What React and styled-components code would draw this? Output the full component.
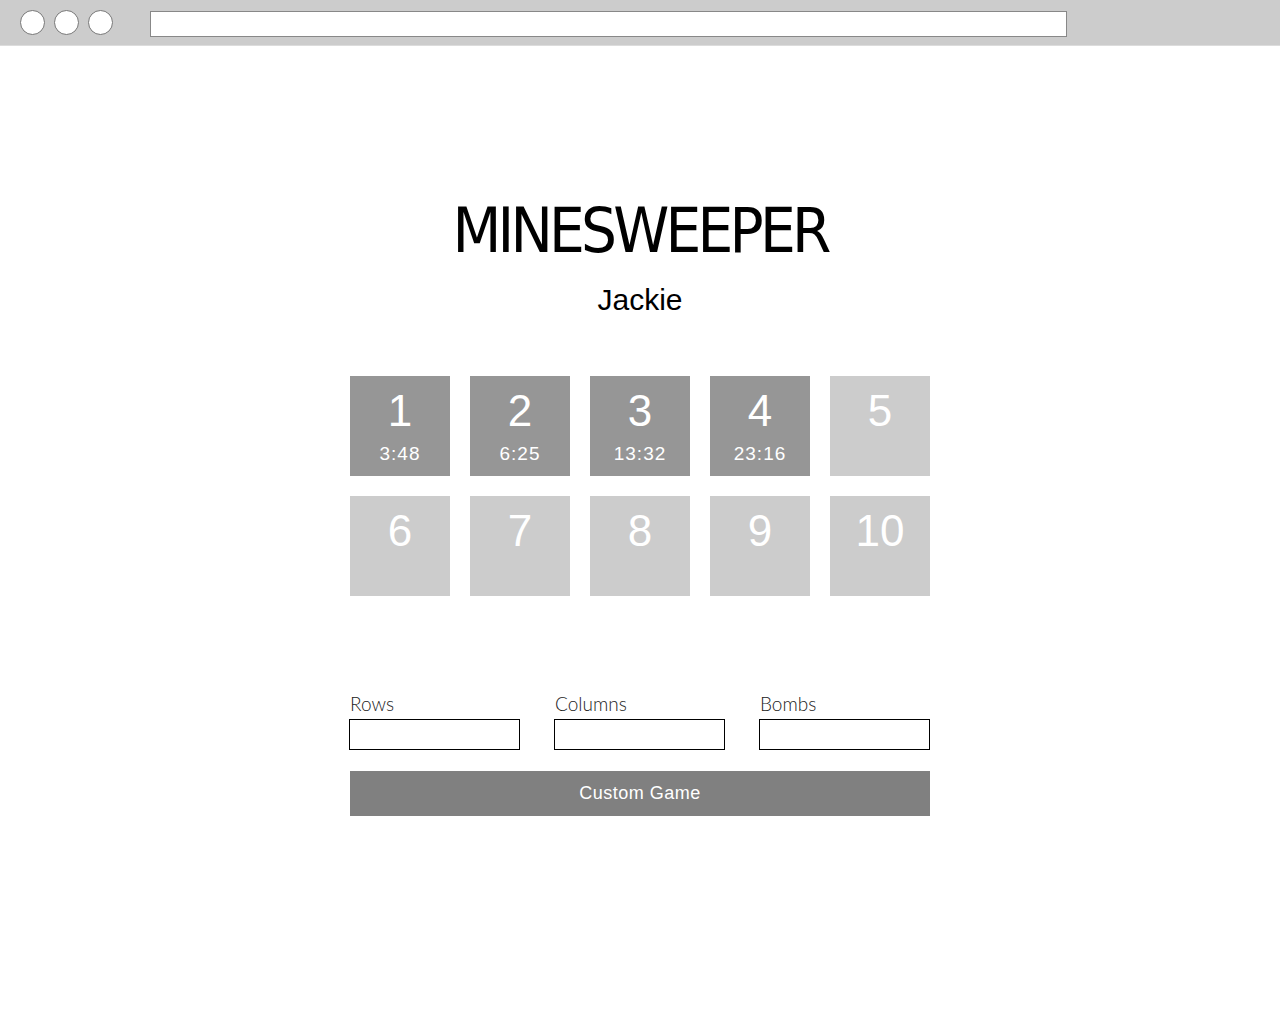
import React from 'react';
import styled, { createGlobalStyle } from 'styled-components';

const levels = [
  { n: 1, time: '3:48' },
  { n: 2, time: '6:25' },
  { n: 3, time: '13:32' },
  { n: 4, time: '23:16' },
  { n: 5 },
  { n: 6 },
  { n: 7 },
  { n: 8 },
  { n: 9 },
  { n: 10 },
];

const fields = ['Rows', 'Columns', 'Bombs'];

function App() {
  return (
    <>
      <GlobalStyle />
      <BrowserBar>
        <Dots>
          <Dot />
          <Dot />
          <Dot />
        </Dots>
        <UrlBar />
      </BrowserBar>
      <Main>
        <Title>MINESWEEPER</Title>
        <Player>Jackie</Player>
        <LevelGrid>
          {levels.map((level) => (
            <Level key={level.n} done={!!level.time}>
              <LevelNumber>{level.n}</LevelNumber>
              {level.time && <LevelTime>{level.time}</LevelTime>}
            </Level>
          ))}
        </LevelGrid>
        <CustomForm>
          <Fields>
            {fields.map((name) => (
              <Field key={name}>
                <Label>{name}</Label>
                <Input />
              </Field>
            ))}
          </Fields>
          <Button>Custom Game</Button>
        </CustomForm>
      </Main>
    </>
  );
}

const GlobalStyle = createGlobalStyle`
  body {
    margin: 0;
    background: #fff;
    font-family: 'Liberation Sans', Arial, sans-serif;
  }
`;

const BrowserBar = styled.div`
  height: 46px;
  background: #cccccc;
  border-bottom: 1px solid #dcdcdc;
  display: flex;
  align-items: center;
  padding: 0 0 0 20px;
  box-sizing: border-box;
`;

const Dots = styled.div`
  display: flex;
  gap: 9px;
  margin-right: 37px;
`;

const Dot = styled.div`
  width: 23px;
  height: 23px;
  border-radius: 50%;
  background: #fff;
  border: 1px solid #777;
`;

const UrlBar = styled.div`
  width: 915px;
  height: 24px;
  margin-top: 3px;
  background: #fff;
  border: 1px solid #888;
`;

const Main = styled.div`
  width: 580px;
  margin: 0 auto;
  display: flex;
  flex-direction: column;
  align-items: center;
`;

const Title = styled.h1`
  margin: 145px 0 0;
  font-family: 'Liberation Sans Narrow', 'DejaVu Sans Condensed', sans-serif;
  font-weight: 400;
  font-size: 63px;
  line-height: 80px;
  letter-spacing: -3.8px;
  color: #000;
`;

const Player = styled.div`
  margin-top: 9px;
  font-size: 30px;
  line-height: 40px;
  color: #000;
`;

const LevelGrid = styled.div`
  margin-top: 56px;
  display: grid;
  grid-template-columns: repeat(5, 100px);
  gap: 20px;
`;

const Level = styled.div`
  width: 100px;
  height: 100px;
  background: ${(p) => (p.done ? '#969696' : '#cccccc')};
  color: #fff;
  display: flex;
  flex-direction: column;
  align-items: center;
`;

const LevelNumber = styled.div`
  margin-top: 12px;
  font-size: 44px;
  line-height: 46px;
`;

const LevelTime = styled.div`
  margin-top: 9px;
  font-size: 19px;
  line-height: 22px;
  letter-spacing: 1px;
`;

const CustomForm = styled.div`
  margin-top: 97px;
  width: 100%;
`;

const Fields = styled.div`
  display: grid;
  grid-template-columns: repeat(3, 171px);
  justify-content: space-between;
  margin-left: -1px;
`;

const Field = styled.div`
  display: flex;
  flex-direction: column;
`;

const Label = styled.label`
  font-family: Lato, sans-serif;
  font-weight: 300;
  font-size: 19px;
  line-height: 22px;
  color: #222;
  margin-left: 1px;
`;

const Input = styled.input`
  margin-top: 4px;
  width: 171px;
  height: 31px;
  box-sizing: border-box;
  border: 1px solid #000;
  border-radius: 0;
  padding: 0 6px;
`;

const Button = styled.button`
  margin-top: 21px;
  width: 100%;
  height: 45px;
  background: #808080;
  border: none;
  color: #fff;
  font-family: 'Liberation Sans', sans-serif;
  font-size: 18px;
  letter-spacing: 0.5px;
  cursor: pointer;
`;

export default App;
